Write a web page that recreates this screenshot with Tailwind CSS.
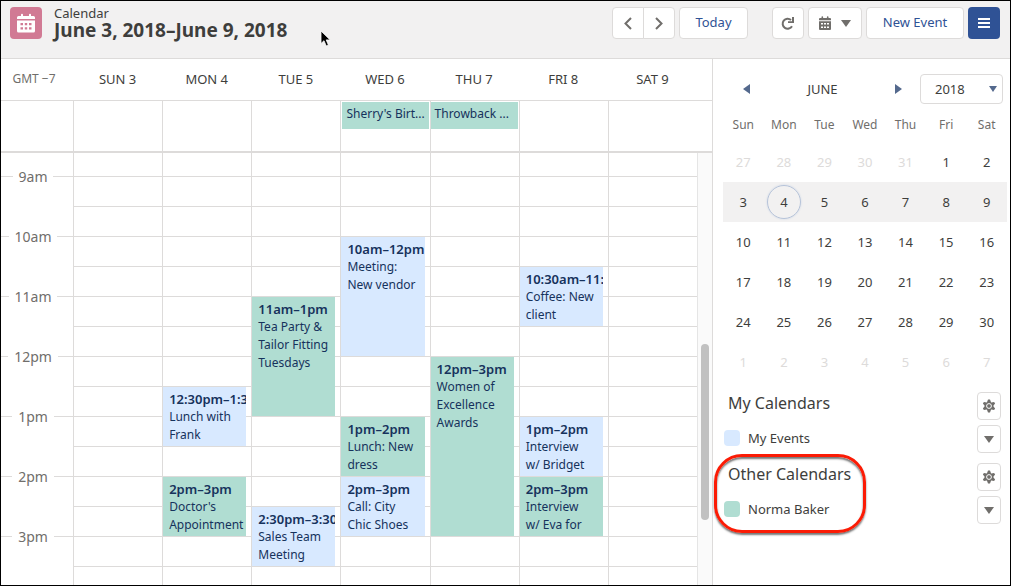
<!DOCTYPE html>
<html lang="en">
<head>
  <meta charset="UTF-8">
  <meta name="viewport" content="width=device-width, initial-scale=1.0">
  <title>Calendar</title>
  <script src="https://cdn.jsdelivr.net/npm/@tailwindcss/browser@4"></script>
</head>
<body class="font-['Noto_Sans',sans-serif] text-[13px] leading-[18px] text-[#3e3e3c] bg-white">
<div class="relative flex flex-col min-h-screen border border-black overflow-hidden">

  <!-- Header -->
  <header class="flex items-start justify-between h-[58px] pt-1.5 pl-[9px] pr-2.5 bg-[#f2f1f1] border-b border-[#dddbda]">
    <div class="flex items-start gap-3">
      <div class="flex items-center justify-center size-8 rounded bg-[#d17a94]">
        <svg class="size-5" viewBox="0 0 20 20" fill="#fff">
          <path d="M2.500 3H5V1.800a1 1 0 0 1 2 0V3h6V1.800a1 1 0 0 1 2 0V3h2.500A1.500 1.500 0 0 1 19 4.500V6H1V4.500A1.500 1.500 0 0 1 2.500 3z"/>
          <path fill-rule="evenodd" d="M1 7.500h18V18a1.500 1.500 0 0 1-1.500 1.500h-15A1.500 1.500 0 0 1 1 18zM4.500 10v2.200H7V10zm4.300 0v2.200h2.400V10zm4.200 0v2.200h2.500V10zM4.500 14.300v2.200H7v-2.200zm4.300 0v2.200h2.400v-2.200zm4.200 0v2.200h2.500v-2.200z"/>
        </svg>
      </div>
      <div class="-mt-0.5">
        <p class="leading-4">Calendar</p>
        <h1 class="text-[19px] leading-[18px] font-bold">June 3, 2018–June 9, 2018</h1>
      </div>
    </div>
    <div class="flex gap-1">
      <div class="flex">
        <button aria-label="Previous week" class="flex items-center justify-center w-8 h-8 bg-white border border-[#dddbda] rounded-l">
          <svg class="size-4" viewBox="0 0 16 16" fill="none" stroke="#706e6b" stroke-width="2"><path d="M11 3L5.500 8.500L11 14"/></svg>
        </button>
        <button aria-label="Next week" class="flex items-center justify-center w-8 h-8 -ml-px bg-white border border-[#dddbda] rounded-r">
          <svg class="size-4" viewBox="0 0 16 16" fill="none" stroke="#706e6b" stroke-width="2"><path d="M5 3L10.500 8.500L5 14"/></svg>
        </button>
      </div>
      <button class="w-[69px] h-8 pb-0.5 bg-white border border-[#dddbda] rounded text-[#2f5295]">Today</button>
      <button aria-label="Refresh" class="flex items-center justify-center w-8 h-8 ml-5 bg-white border border-[#dddbda] rounded">
        <svg class="size-4" viewBox="0 0 16 16"><path d="M11 5A5 5 0 1 0 12 11.200" fill="none" stroke="#706e6b" stroke-width="2"/><path d="M14 2v6H8V6.300h4V2z" fill="#706e6b"/></svg>
      </button>
      <button aria-label="Calendar view" class="flex items-center justify-center gap-2.5 w-[54px] h-8 bg-white border border-[#dddbda] rounded">
        <svg class="w-3 h-3.5" viewBox="0 0 12 14" fill="#706e6b">
          <path d="M1 2h1.500V1a.8.8 0 0 1 1.600 0v1h3.800V1a.8.8 0 0 1 1.600 0v1H11a1 1 0 0 1 1 1v1.300H0V3a1 1 0 0 1 1-1z"/>
          <path fill-rule="evenodd" d="M0 5.300h12V13a1 1 0 0 1-1 1H1a1 1 0 0 1-1-1zM2 7v1.500h2V7zm3 0v1.500h2V7zm3 0v1.500h2V7zM2 10.500V12h2v-1.500zm3 0V12h2v-1.500zm3 0V12h2v-1.500z"/>
        </svg>
        <svg class="w-2.5 h-[7px]" viewBox="0 0 10 7" fill="#706e6b"><path d="M0 0h10L5 7z"/></svg>
      </button>
      <button class="w-[98px] h-8 pb-0.5 bg-white border border-[#dddbda] rounded text-[#2f5295]">New Event</button>
      <button aria-label="Toggle side panel" class="flex items-center justify-center size-8 rounded bg-[#2f5295]">
        <svg class="w-3 h-3" viewBox="0 0 12 12" fill="#fff"><path d="M0 1h12v2H0zM0 5h12v2H0zM0 9h12v2H0z"/></svg>
      </button>
    </div>
  </header>

  <div class="flex grow">
    <!-- Week view -->
    <main class="flex flex-col grow min-w-0">
      <div class="grid grid-cols-[72px_repeat(7,minmax(0,1fr))_15px] items-center h-[42px] pb-0.5 border-b border-[#dddbda] text-center">
        <span class="text-xs text-[#706e6b] pr-1.5">GMT −7</span>
        <span>SUN 3</span><span>MON 4</span><span>TUE 5</span><span>WED 6</span><span>THU 7</span><span>FRI 8</span><span>SAT 9</span>
      </div>

      <div class="grid grid-cols-[72px_repeat(7,minmax(0,1fr))_15px] h-[52px] border-b-2 border-[#dddbda] text-xs leading-[18px] text-[#16325c]">
        <div></div>
        <div class="border-l border-[#dddbda]"></div>
        <div class="border-l border-[#dddbda]"></div>
        <div class="border-l border-[#dddbda]"></div>
        <div class="border-l border-[#dddbda] pt-px px-px"><a href="#" class="block h-[27px] pl-1 pt-[3px] bg-[#b0ddd2] whitespace-nowrap overflow-hidden">Sherry's Birt...</a></div>
        <div class="border-l border-[#dddbda] pt-px pr-px"><a href="#" class="block h-[27px] pl-1 pt-[3px] bg-[#b0ddd2] whitespace-nowrap overflow-hidden">Throwback ...</a></div>
        <div class="border-l border-[#dddbda]"></div>
        <div class="border-l border-[#dddbda]"></div>
      </div>

      <div class="flex grow">
        <div id="hours" class="flex flex-col shrink-0 gap-[39px] w-[72px] pt-[13px] text-sm text-[#706e6b]"></div>
        <div id="week" class="grid grow min-w-0 grid-cols-[repeat(7,minmax(0,1fr))] grid-rows-[24px_repeat(13,30px)_minmax(18px,1fr)] text-xs leading-[18px] text-[#16325c]"></div>
        <div class="shrink-0 w-[15px] pl-[3px] bg-[#fafafa] border-l border-[#e5e5e5]">
          <div class="w-2 h-[176px] mt-[191px] rounded-full bg-[#c1c1c1]"></div>
        </div>
      </div>
    </main>

    <!-- Side panel -->
    <aside class="relative shrink-0 w-[298px] pl-2.5 pr-[3px] border-l border-[#dddbda]">
      <div class="flex items-center justify-between h-[60px] pl-5 pr-1">
        <button aria-label="Previous month"><svg class="w-[7px] h-2.5" viewBox="0 0 7 10" fill="#54698d"><path d="M7 0v10L0 5z"/></svg></button>
        <span>JUNE</span>
        <div class="flex items-center gap-[18px]">
          <button aria-label="Next month"><svg class="w-[7px] h-2.5" viewBox="0 0 7 10" fill="#54698d"><path d="M0 0v10l7-5z"/></svg></button>
          <div class="relative">
            <select aria-label="Year" class="block appearance-none w-[83px] h-[30px] pl-3.5 border border-[#dddbda] rounded bg-white">
              <option>2018</option>
            </select>
            <svg class="absolute right-1.5 top-3 w-2 h-1.5 pointer-events-none" viewBox="0 0 8 6" fill="#54698d"><path d="M0 0h8L4 6z"/></svg>
          </div>
        </div>
      </div>

      <table class="w-full table-fixed text-center">
        <thead>
          <tr class="leading-3 text-xs text-[#706e6b]">
            <th class="font-normal leading-3 pb-[11px]">Sun</th><th class="font-normal leading-3 pb-[11px]">Mon</th><th class="font-normal leading-3 pb-[11px]">Tue</th><th class="font-normal leading-3 pb-[11px]">Wed</th><th class="font-normal leading-3 pb-[11px]">Thu</th><th class="font-normal leading-3 pb-[11px]">Fri</th><th class="font-normal leading-3 pb-[11px]">Sat</th>
          </tr>
        </thead>
        <tbody id="month"></tbody>
      </table>

      <section class="flex justify-between pt-2.5 pr-1.5">
        <div>
          <h2 class="h-[30px] pl-[5px] text-base leading-[22px]">My Calendars</h2>
          <label class="flex items-center gap-2 h-[31px] pl-px"><input type="checkbox" class="appearance-none size-4 rounded bg-[#d8e9ff]">My Events</label>
        </div>
        <div class="flex flex-col gap-[5px]">
          <button aria-label="My Calendars settings" class="gear flex items-center justify-center w-6 h-7 border border-[#dddbda] rounded"></button>
          <button aria-label="My Events options" class="flex items-center justify-center w-6 h-7 border border-[#dddbda] rounded"><svg class="w-2.5 h-[7px]" viewBox="0 0 10 7" fill="#706e6b"><path d="M0 0h10L5 7z"/></svg></button>
        </div>
      </section>
      <section class="flex justify-between pt-2.5 pr-1.5">
        <div>
          <h2 class="h-[30px] pl-[5px] text-base leading-[22px]">Other Calendars</h2>
          <label class="flex items-center gap-2 h-[31px] pl-px"><input type="checkbox" class="appearance-none size-4 rounded bg-[#b0ddd2]">Norma Baker</label>
        </div>
        <div class="flex flex-col gap-[5px]">
          <button aria-label="Other Calendars settings" class="gear flex items-center justify-center w-6 h-7 border border-[#dddbda] rounded"></button>
          <button aria-label="Norma Baker options" class="flex items-center justify-center w-6 h-7 border border-[#dddbda] rounded"><svg class="w-2.5 h-[7px]" viewBox="0 0 10 7" fill="#706e6b"><path d="M0 0h10L5 7z"/></svg></button>
        </div>
      </section>

      <!-- Callout around Other Calendars -->
      <div class="absolute left-px top-[395px] w-[152px] h-[79px] border-3 border-[#fb1b05] rounded-[28px] shadow-[0_2px_2px_#777,inset_0_2px_2px_#777] pointer-events-none"></div>
    </aside>
  </div>

  <!-- Pointer -->
  <svg class="absolute left-[319px] top-[29px] w-3 h-[18px]" viewBox="0 0 12 18"><path d="M1 1v12.500l3-2.800 2.200 5.200 2.200-1-2.200-5h4z" fill="#000" stroke="#fff" stroke-width=".8"/></svg>
</div>

<script>
  const colors = { blue: 'bg-[#d8e9ff]', green: 'bg-[#b0ddd2]' };

  // day: 0 = Sunday, row: first half-hour slot, span: number of slots
  const events = [
    { day: 1, row: 9, span: 2, color: 'blue', time: '12:30pm–1:30pm', title: 'Lunch with\nFrank' },
    { day: 1, row: 12, span: 2, color: 'green', time: '2pm–3pm', title: "Doctor's\nAppointment" },
    { day: 2, row: 6, span: 4, color: 'green', time: '11am–1pm', title: 'Tea Party &\nTailor Fitting\nTuesdays' },
    { day: 2, row: 13, span: 2, color: 'blue', time: '2:30pm–3:30pm', title: 'Sales Team\nMeeting' },
    { day: 3, row: 4, span: 4, color: 'blue', time: '10am–12pm', title: 'Meeting:\nNew vendor' },
    { day: 3, row: 10, span: 2, color: 'green', time: '1pm–2pm', title: 'Lunch: New\ndress' },
    { day: 3, row: 12, span: 2, color: 'blue', time: '2pm–3pm', title: 'Call: City\nChic Shoes' },
    { day: 4, row: 8, span: 6, color: 'green', time: '12pm–3pm', title: 'Women of\nExcellence\nAwards' },
    { day: 5, row: 5, span: 2, color: 'blue', time: '10:30am–11:30am', title: 'Coffee: New\nclient' },
    { day: 5, row: 10, span: 2, color: 'blue', time: '1pm–2pm', title: 'Interview\nw/ Bridget' },
    { day: 5, row: 12, span: 2, color: 'green', time: '2pm–3pm', title: 'Interview\nw/ Eva for' },
  ];

  document.getElementById('hours').innerHTML = ['9am', '10am', '11am', '12pm', '1pm', '2pm', '3pm'].map(h => `
    <div class="flex items-center h-[21px]">
      <span class="flex-[1_1_0px] h-px bg-[#dddbda]"></span>
      <span class="px-1.5">${h}</span>
      <span class="flex-[1_1_8px] h-px bg-[#dddbda]"></span>
    </div>`).join('');

  let html = '';
  for (let row = 1; row <= 15; row++) {
    for (let day = 1; day <= 7; day++) {
      const line = row < 15 ? 'border-b' : '';
      html += `<div class="border-l ${line} border-[#dddbda]" style="grid-area: ${row} / ${day}"></div>`;
    }
  }
  for (const e of events) {
    html += `<a href="#" class="ml-px mr-[5px] mb-px pl-1.5 pt-[3px] overflow-hidden whitespace-pre ${colors[e.color]}" style="grid-area: ${e.row} / ${e.day + 1} / span ${e.span}"><b class="block text-[13px] leading-[18px] font-semibold">${e.time}</b>${e.title}</a>`;
  }
  document.getElementById('week').innerHTML = html;

  const days = [27, 28, 29, 30, 31];
  for (let d = 1; d <= 30; d++) days.push(d);
  for (let d = 1; d <= 7; d++) days.push(d);
  let month = '';
  for (let w = 0; w < 6; w++) {
    month += `<tr class="h-10 ${w === 1 ? 'bg-[#f2f1f1]' : ''}">`;
    for (let i = w * 7; i < w * 7 + 7; i++) {
      const outside = i < 5 || i > 34;
      const today = i === 8;
      month += `<td class="${outside ? 'text-[#dddbda]' : ''}">${today
        ? '<span class="flex items-center justify-center size-[34px] mx-auto rounded-full border border-[#b6c3d9] shadow-[0_0_2px_#c8d3e4]">4</span>'
        : days[i]}</td>`;
    }
    month += '</tr>';
  }
  document.getElementById('month').innerHTML = month;

  const gear = `<svg class="size-3.5" viewBox="0 0 14 14"><path d="M6 .5h2l1.100 2.900 3-.5 1 1.700L11.200 7l1.900 2.400-1 1.700-3-.5L8 13.500H6l-1.100-2.900-3 .5-1-1.700L2.800 7 .9 4.600l1-1.700 3 .5z" fill="#706e6b"/><circle cx="7" cy="7" r="2.400" fill="none" stroke="#fff" stroke-width="1"/></svg>`;
  document.querySelectorAll('.gear').forEach(b => b.innerHTML = gear);
</script>
</body>
</html>
